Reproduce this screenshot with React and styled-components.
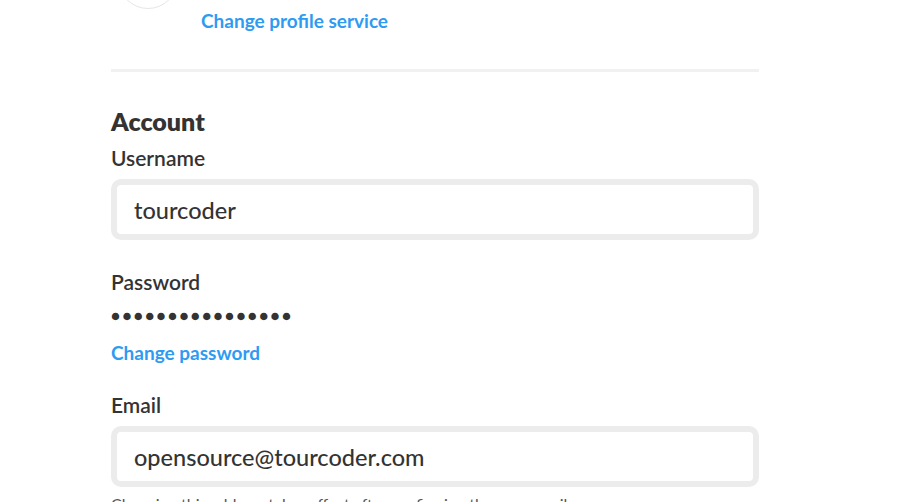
import React from "react";
import styled, { createGlobalStyle } from "styled-components";

const Global = createGlobalStyle`
  html, body { margin: 0; padding: 0; background: #fff; }
  body { font-family: "Lato", "Noto Sans", sans-serif; color: #333; overflow: hidden; }
`;

const Page = styled.div`
  width: 648px;
  margin-left: 111px;
  padding-top: 1px;
`;

const ProfileRow = styled.div`
  display: flex;
  align-items: flex-start;
  gap: 23px;
  padding-left: 7px;
  margin-top: -52px;
`;

const Avatar = styled.div`
  width: 58px;
  height: 58px;
  border-radius: 50%;
  border: 1px solid #e6e6e6;
  flex: none;
`;

const LinkColumn = styled.div`
  padding-top: 61px;
`;

const Link = styled.a`
  display: block;
  color: #2e9bf2;
  font-size: 19px;
  font-weight: 700;
  text-decoration: none;
  cursor: pointer;
  line-height: 22px;
`;

const Divider = styled.hr`
  border: none;
  height: 3px;
  background: #f1f1f1;
  margin: 37px 0 34px;
`;

const Heading = styled.h2`
  margin: 0 0 10px;
  font-size: 25px;
  font-weight: 800;
  line-height: 30px;
  color: #333;
`;

const Label = styled.div`
  font-size: 21px;
  font-weight: 600;
  line-height: 24px;
  color: #333;
  margin-bottom: ${(p) => p.$mb || 9}px;
`;

const Field = styled.div`
  margin-bottom: ${(p) => p.$mb || 0}px;
`;

const Input = styled.input`
  box-sizing: border-box;
  display: block;
  width: 100%;
  height: 61px;
  border: 6px solid #ececec;
  border-radius: 10px;
  padding: 0 17px;
  font-family: inherit;
  font-size: 23.5px;
  font-weight: 500;
  color: #333;
  outline: none;
  background: #fff;
`;

const Dots = styled.div`
  font-size: 15px;
  letter-spacing: 2.4px;
  line-height: 24px;
  color: #333;
  margin-bottom: 15px;
`;

const Help = styled.div`
  font-size: 16px;
  color: #555;
  margin-top: 7px;
`;

export default function App() {
  return (
    <>
      <Global />
      <Page>
        <ProfileRow>
          <Avatar />
          <LinkColumn>
            <Link>Change profile service</Link>
          </LinkColumn>
        </ProfileRow>
        <Divider />
        <Heading>Account</Heading>
        <Field $mb={30}>
          <Label>Username</Label>
          <Input defaultValue="tourcoder" />
        </Field>
        <Field $mb={29}>
          <Label>Password</Label>
          <Dots>●●●●●●●●●●●●●●●●</Dots>
          <Link>Change password</Link>
        </Field>
        <Field>
          <Label>Email</Label>
          <Input defaultValue="opensource@tourcoder.com" />
          <Help>Changing this address takes effect after confirming the new email.</Help>
        </Field>
      </Page>
    </>
  );
}
